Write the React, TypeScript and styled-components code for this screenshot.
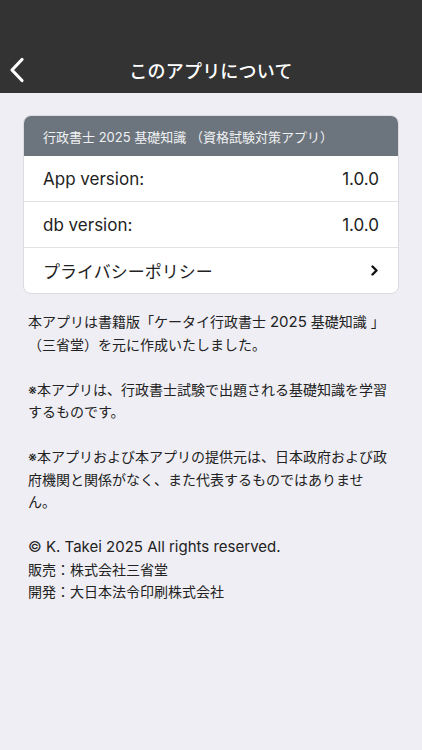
import React from "react";
import styled, { createGlobalStyle } from "styled-components";

const GlobalStyle = createGlobalStyle`
  html, body {
    margin: 0;
    padding: 0;
    background: #efeef4;
  }
  body {
    font-family: "Inter", "Noto Sans CJK JP", sans-serif;
    color: #222222;
    -webkit-font-smoothing: antialiased;
  }
  * { box-sizing: border-box; }
`;

const Page = styled.div`
  width: 422px;
  min-height: 750px;
  background: #efeef4;
`;

const Header = styled.header`
  background: #333333;
  display: flex;
  flex-direction: column;
`;

const StatusBar = styled.div`
  height: 47px;
`;

const NavBar = styled.nav`
  height: 46px;
  display: flex;
  align-items: center;
  justify-content: center;
  position: relative;
`;

const BackButton = styled.button`
  position: absolute;
  left: 9px;
  top: 50%;
  transform: translateY(-50%);
  background: none;
  border: none;
  padding: 0;
  display: flex;
  align-items: center;
  cursor: pointer;
`;

const Title = styled.h1`
  margin: 0;
  font-size: 18px;
  font-weight: 500;
  color: #ffffff;
  letter-spacing: 0.2px;
`;

const Content = styled.main`
  padding: 22px 23px 40px 23px;
  display: flex;
  flex-direction: column;
`;

const Card = styled.section`
  background: #ffffff;
  border-radius: 8px;
  border: 1px solid #dcdce0;
  overflow: hidden;
`;

const CardHeader = styled.div`
  height: 40px;
  background: #6c757d;
  color: #f0f1f3;
  font-size: 13px;
  display: flex;
  align-items: center;
  padding: 0 19px;
`;

const Row = styled.div<{ $last?: boolean }>`
  height: ${(p) => (p.$last ? "45px" : "46px")};
  display: flex;
  align-items: center;
  justify-content: space-between;
  padding: 0 19px;
  border-bottom: ${(p) => (p.$last ? "none" : "1px solid #e2e2e6")};
  font-size: 17px;
  color: #222222;
`;

const Label = styled.span``;

const Value = styled.span``;

const Info = styled.div`
  margin-top: 17px;
  padding: 0 2px 0 5px;
  font-size: 14px;
  line-height: 22.5px;
  color: #222222;
`;

const Para = styled.p`
  margin: 0 0 22.5px 0;
  &:last-child { margin-bottom: 0; }
`;

const Line = styled.span<{ $latin?: boolean }>`
  display: block;
  white-space: nowrap;
  font-size: ${(p) => (p.$latin ? "15px" : "inherit")};
`;

const Num = styled.span`
  font-size: 15px;
`;

export default function App() {
  return (
    <Page>
      <GlobalStyle />
      <Header>
        <StatusBar />
        <NavBar>
          <BackButton aria-label="戻る">
            <svg width="16" height="26" viewBox="0 0 16 26">
              <path
                d="M13 2.5 L3 13 L13 23.5"
                fill="none"
                stroke="#ffffff"
                strokeWidth="3.2"
                strokeLinecap="round"
                strokeLinejoin="round"
              />
            </svg>
          </BackButton>
          <Title>このアプリについて</Title>
        </NavBar>
      </Header>
      <Content>
        <Card>
          <CardHeader>行政書士 2025 基礎知識 （資格試験対策アプリ）</CardHeader>
          <Row>
            <Label>App version:</Label>
            <Value>1.0.0</Value>
          </Row>
          <Row>
            <Label>db version:</Label>
            <Value>1.0.0</Value>
          </Row>
          <Row $last>
            <Label>プライバシーポリシー</Label>
            <svg width="9" height="11" viewBox="0 0 9 11">
              <path
                d="M2.5 1.5 L6.5 5.5 L2.5 9.5"
                fill="none"
                stroke="#111111"
                strokeWidth="2.4"
                strokeLinecap="round"
                strokeLinejoin="round"
              />
            </svg>
          </Row>
        </Card>
        <Info>
          <Para>
            <Line>
              本アプリは書籍版「ケータイ行政書士 <Num>2025</Num> 基礎知識 」
            </Line>
            <Line>（三省堂）を元に作成いたしました。</Line>
          </Para>
          <Para>
            <Line>※本アプリは、行政書士試験で出題される基礎知識を学習</Line>
            <Line>するものです。</Line>
          </Para>
          <Para>
            <Line>※本アプリおよび本アプリの提供元は、日本政府および政</Line>
            <Line>府機関と関係がなく、また代表するものではありませ</Line>
            <Line>ん。</Line>
          </Para>
          <Para>
            <Line $latin>© K. Takei 2025 All rights reserved.</Line>
            <Line>販売：株式会社三省堂</Line>
            <Line>開発：大日本法令印刷株式会社</Line>
          </Para>
        </Info>
      </Content>
    </Page>
  );
}
